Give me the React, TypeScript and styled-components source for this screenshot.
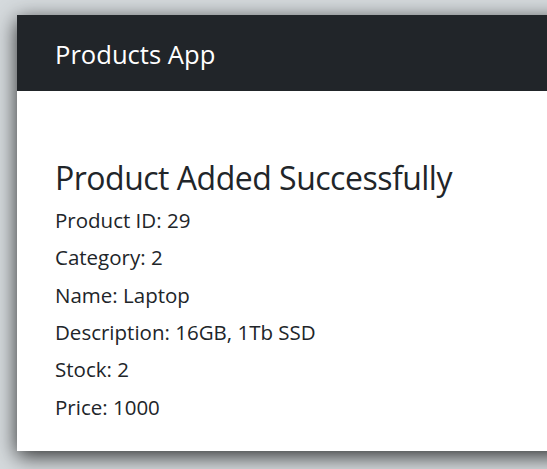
import React from "react";
import styled, { createGlobalStyle } from "styled-components";

const Global = createGlobalStyle`
  html, body { margin: 0; padding: 0; }
  body {
    background: #d5dadd;
    font-family: "Open Sans", "Noto Sans", sans-serif;
    overflow: hidden;
    height: 469px;
  }
`;

const Stage = styled.div`
  padding: 15px 0 0 17px;
`;

const Window = styled.div`
  width: 560px;
  background: #ffffff;
  box-shadow: 0 5px 20px rgba(0, 0, 0, 0.8);
`;

const NavBar = styled.header`
  height: 76px;
  background: #212529;
  display: flex;
  align-items: center;
  padding-left: 38px;
`;

const Brand = styled.span`
  color: #ffffff;
  font-size: 25.6px;
  line-height: 30px;
  padding-top: 3px;
`;

const Content = styled.main`
  padding: 68px 0 25px 38px;
  color: #212529;
`;

const Title = styled.h1`
  margin: 0 0 4.7px;
  font-size: 32px;
  line-height: 38px;
  font-weight: 400;
  letter-spacing: -0.5px;
`;

const Field = styled.p`
  margin: 0;
  font-size: 20.5px;
  line-height: 37.4px;
`;

const fields: [string, string][] = [
  ["Product ID", "29"],
  ["Category", "2"],
  ["Name", "Laptop"],
  ["Description", "16GB, 1Tb SSD"],
  ["Stock", "2"],
  ["Price", "1000"],
];

export default function App() {
  return (
    <>
      <Global />
      <Stage>
        <Window>
          <NavBar>
            <Brand>Products App</Brand>
          </NavBar>
          <Content>
            <Title>Product Added Successfully</Title>
            {fields.map(([k, v]) => (
              <Field key={k}>
                {k}: {v}
              </Field>
            ))}
          </Content>
        </Window>
      </Stage>
    </>
  );
}
